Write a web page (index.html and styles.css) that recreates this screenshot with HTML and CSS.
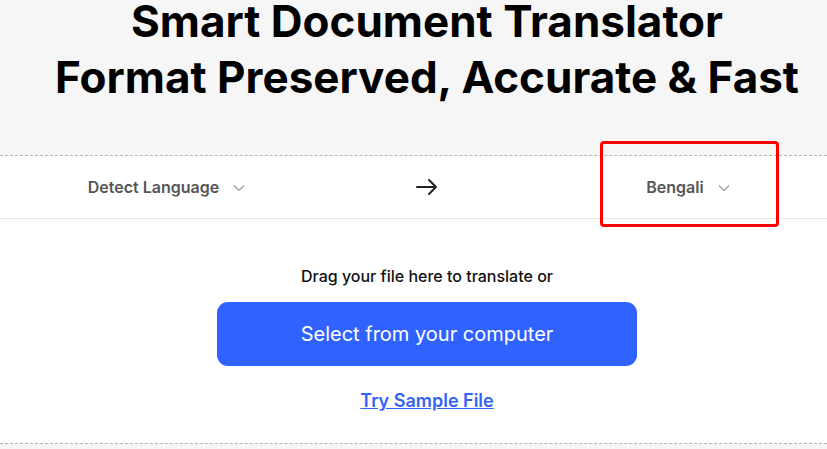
FILE: index.html
```html
<!DOCTYPE html>
<html lang="en">
<head>
<meta charset="utf-8">
<title>Smart Document Translator</title>
<link rel="stylesheet" href="styles.css">
</head>
<body>
<div class="page">
  <header class="hero">
    <h1 class="title"><span class="title-line">Smart Document Translator</span><span class="title-line title-line-2">Format Preserved, Accurate &amp; Fast</span></h1>
  </header>
  <section class="tool">
    <div class="lang-row">
      <div class="lang lang-from">
        <span class="lang-name">Detect Language</span>
        <svg class="chev" width="12" height="8" viewBox="0 0 12 8"><path d="M1 1.5 L6 6.5 L11 1.5" fill="none" stroke="#9a9a9a" stroke-width="1.2"/></svg>
      </div>
      <div class="swap">
        <svg width="22" height="18" viewBox="0 0 22 18"><path d="M1 9 H20 M13 2 L20 9 L13 16" fill="none" stroke="#222" stroke-width="2" stroke-linecap="round" stroke-linejoin="round"/></svg>
      </div>
      <div class="lang lang-to">
        <span class="lang-name">Bengali</span>
        <svg class="chev" width="12" height="8" viewBox="0 0 12 8"><path d="M1 1.5 L6 6.5 L11 1.5" fill="none" stroke="#9a9a9a" stroke-width="1.2"/></svg>
      </div>
      <div class="highlight"></div>
    </div>
    <div class="drop">
      <p class="drop-text">Drag your file here to translate or</p>
      <button class="select-btn">Select from your computer</button>
      <a class="sample" href="#">Try Sample File</a>
    </div>
  </section>
  <div class="footer-band"></div>
</div>
</body>
</html>
```
FILE: styles.css
```css
html, body {
  margin: 0;
  padding: 0;
  overflow: hidden;
}
body {
  font-family: Inter, "Noto Sans", sans-serif;
  background: #f6f6f6;
  width: 827px;
  height: 449px;
}
.page {
  display: flex;
  flex-direction: column;
}
.hero {
  background: #f6f6f6;
  height: 155px;
  padding-left: 27px;
  display: flex;
  justify-content: center;
  align-items: flex-start;
}
.title {
  margin: 0;
  font-weight: 700;
  font-size: 44px;
  color: #000;
  text-align: center;
  display: flex;
  flex-direction: column;
  align-items: center;
}
.title-line {
  display: block;
  line-height: 42px;
  white-space: nowrap;
}
.title-line-2 {
  margin-top: 14px;
}
.tool {
  background: #fff;
  border-top: 1px dashed #b5b5b5;
  border-bottom: 1px dashed #b5b5b5;
}
.lang-row {
  position: relative;
  display: grid;
  grid-template-columns: 333px 188px 1fr;
  height: 62px;
  align-items: center;
  border-bottom: 1px solid #e6e6e6;
}
.lang {
  display: flex;
  align-items: center;
  justify-content: center;
  gap: 14px;
}
.lang-to {
  padding-left: 28px;
}
.lang-name {
  font-size: 16px;
  font-weight: 600;
  color: #555;
  line-height: 20px;
}
.chev {
  display: block;
  margin-top: 1px;
}
.swap {
  display: flex;
  justify-content: center;
}
.swap svg { display: block; }
.highlight {
  position: absolute;
  left: 600px;
  top: -15px;
  width: 179px;
  height: 86px;
  box-sizing: border-box;
  border: 3px solid #ff0000;
  border-radius: 4px;
}
.drop {
  display: flex;
  flex-direction: column;
  align-items: center;
  padding: 47px 0 31px 27px;
}
.drop-text {
  margin: 0;
  font-size: 16px;
  font-weight: 500;
  color: #111;
  line-height: 20px;
}
.select-btn {
  margin-top: 16px;
  width: 420px;
  height: 64px;
  border: none;
  border-radius: 11px;
  background: #2f62ff;
  color: #fff;
  font-family: Inter, "Noto Sans", sans-serif;
  font-size: 20px;
  font-weight: 400;
}
.sample {
  margin-top: 24px;
  font-size: 18px;
  font-weight: 600;
  color: #3164f4;
  text-decoration: underline;
  line-height: 22px;
}
.footer-band {
  height: 10px;
}
```
